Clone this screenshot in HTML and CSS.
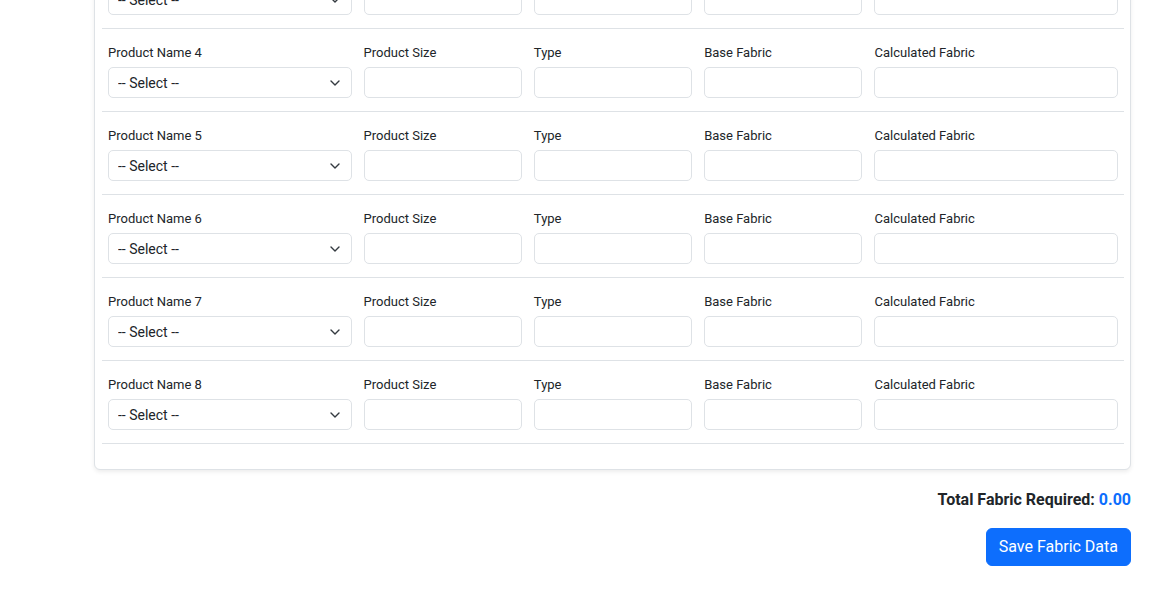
FILE: index.html
```html
<!DOCTYPE html>
<html lang="en">
<head>
<meta charset="utf-8">
<title>Fabric Calculator</title>
<link rel="stylesheet" href="styles.css">
</head>
<body>
<main class="page">
  <section class="card">
    <div class="fabric-row">
      <div class="cell"><label class="field-label">Product Name 1</label><div class="select-wrap"><select class="field select"><option>-- Select --</option></select><svg class="chev" width="10" height="6" viewBox="0 0 10 6"><path d="M1 1 L5 5 L9 1" fill="none" stroke="#343a40" stroke-width="1.4" stroke-linecap="round" stroke-linejoin="round"/></svg></div></div>
      <div class="cell"><label class="field-label">Product Size</label><input class="field" type="text"></div>
      <div class="cell"><label class="field-label">Type</label><input class="field" type="text"></div>
      <div class="cell"><label class="field-label">Base Fabric</label><input class="field" type="text"></div>
      <div class="cell"><label class="field-label">Calculated Fabric</label><input class="field" type="text"></div>
    </div>
    <div class="fabric-row">
      <div class="cell"><label class="field-label">Product Name 2</label><div class="select-wrap"><select class="field select"><option>-- Select --</option></select><svg class="chev" width="10" height="6" viewBox="0 0 10 6"><path d="M1 1 L5 5 L9 1" fill="none" stroke="#343a40" stroke-width="1.4" stroke-linecap="round" stroke-linejoin="round"/></svg></div></div>
      <div class="cell"><label class="field-label">Product Size</label><input class="field" type="text"></div>
      <div class="cell"><label class="field-label">Type</label><input class="field" type="text"></div>
      <div class="cell"><label class="field-label">Base Fabric</label><input class="field" type="text"></div>
      <div class="cell"><label class="field-label">Calculated Fabric</label><input class="field" type="text"></div>
    </div>
    <div class="fabric-row">
      <div class="cell"><label class="field-label">Product Name 3</label><div class="select-wrap"><select class="field select"><option>-- Select --</option></select><svg class="chev" width="10" height="6" viewBox="0 0 10 6"><path d="M1 1 L5 5 L9 1" fill="none" stroke="#343a40" stroke-width="1.4" stroke-linecap="round" stroke-linejoin="round"/></svg></div></div>
      <div class="cell"><label class="field-label">Product Size</label><input class="field" type="text"></div>
      <div class="cell"><label class="field-label">Type</label><input class="field" type="text"></div>
      <div class="cell"><label class="field-label">Base Fabric</label><input class="field" type="text"></div>
      <div class="cell"><label class="field-label">Calculated Fabric</label><input class="field" type="text"></div>
    </div>
    <div class="fabric-row">
      <div class="cell"><label class="field-label">Product Name 4</label><div class="select-wrap"><select class="field select"><option>-- Select --</option></select><svg class="chev" width="10" height="6" viewBox="0 0 10 6"><path d="M1 1 L5 5 L9 1" fill="none" stroke="#343a40" stroke-width="1.4" stroke-linecap="round" stroke-linejoin="round"/></svg></div></div>
      <div class="cell"><label class="field-label">Product Size</label><input class="field" type="text"></div>
      <div class="cell"><label class="field-label">Type</label><input class="field" type="text"></div>
      <div class="cell"><label class="field-label">Base Fabric</label><input class="field" type="text"></div>
      <div class="cell"><label class="field-label">Calculated Fabric</label><input class="field" type="text"></div>
    </div>
    <div class="fabric-row">
      <div class="cell"><label class="field-label">Product Name 5</label><div class="select-wrap"><select class="field select"><option>-- Select --</option></select><svg class="chev" width="10" height="6" viewBox="0 0 10 6"><path d="M1 1 L5 5 L9 1" fill="none" stroke="#343a40" stroke-width="1.4" stroke-linecap="round" stroke-linejoin="round"/></svg></div></div>
      <div class="cell"><label class="field-label">Product Size</label><input class="field" type="text"></div>
      <div class="cell"><label class="field-label">Type</label><input class="field" type="text"></div>
      <div class="cell"><label class="field-label">Base Fabric</label><input class="field" type="text"></div>
      <div class="cell"><label class="field-label">Calculated Fabric</label><input class="field" type="text"></div>
    </div>
    <div class="fabric-row">
      <div class="cell"><label class="field-label">Product Name 6</label><div class="select-wrap"><select class="field select"><option>-- Select --</option></select><svg class="chev" width="10" height="6" viewBox="0 0 10 6"><path d="M1 1 L5 5 L9 1" fill="none" stroke="#343a40" stroke-width="1.4" stroke-linecap="round" stroke-linejoin="round"/></svg></div></div>
      <div class="cell"><label class="field-label">Product Size</label><input class="field" type="text"></div>
      <div class="cell"><label class="field-label">Type</label><input class="field" type="text"></div>
      <div class="cell"><label class="field-label">Base Fabric</label><input class="field" type="text"></div>
      <div class="cell"><label class="field-label">Calculated Fabric</label><input class="field" type="text"></div>
    </div>
    <div class="fabric-row">
      <div class="cell"><label class="field-label">Product Name 7</label><div class="select-wrap"><select class="field select"><option>-- Select --</option></select><svg class="chev" width="10" height="6" viewBox="0 0 10 6"><path d="M1 1 L5 5 L9 1" fill="none" stroke="#343a40" stroke-width="1.4" stroke-linecap="round" stroke-linejoin="round"/></svg></div></div>
      <div class="cell"><label class="field-label">Product Size</label><input class="field" type="text"></div>
      <div class="cell"><label class="field-label">Type</label><input class="field" type="text"></div>
      <div class="cell"><label class="field-label">Base Fabric</label><input class="field" type="text"></div>
      <div class="cell"><label class="field-label">Calculated Fabric</label><input class="field" type="text"></div>
    </div>
    <div class="fabric-row">
      <div class="cell"><label class="field-label">Product Name 8</label><div class="select-wrap"><select class="field select"><option>-- Select --</option></select><svg class="chev" width="10" height="6" viewBox="0 0 10 6"><path d="M1 1 L5 5 L9 1" fill="none" stroke="#343a40" stroke-width="1.4" stroke-linecap="round" stroke-linejoin="round"/></svg></div></div>
      <div class="cell"><label class="field-label">Product Size</label><input class="field" type="text"></div>
      <div class="cell"><label class="field-label">Type</label><input class="field" type="text"></div>
      <div class="cell"><label class="field-label">Base Fabric</label><input class="field" type="text"></div>
      <div class="cell"><label class="field-label">Calculated Fabric</label><input class="field" type="text"></div>
    </div>
  </section>
  <div class="total">Total Fabric Required: <span class="total-value">0.00</span></div>
  <div class="actions"><button class="btn-primary" type="button">Save Fabric Data</button></div>
</main>
</body>
</html>
```

FILE: styles.css
```css
* { box-sizing: border-box; }

html, body {
  margin: 0;
  background: #ffffff;
}

body {
  font-family: Roboto, "Liberation Sans", sans-serif;
  color: #212529;
  overflow: hidden;
}

.page {
  margin: 0 41px 0 94px;
}

.card {
  margin-top: -221px;
  border: 1px solid #dee2e6;
  border-radius: 6px;
  background: #fff;
  padding: 0 6px 25px 7px;
  box-shadow: 0 2px 4px rgba(0, 0, 0, 0.075);
}

.fabric-row {
  display: grid;
  grid-template-columns: 3fr 2fr 2fr 2fr 3fr;
  padding: 13px 0 13px;
  border-bottom: 1px solid #dee2e6;
}

.cell {
  padding: 0 6px;
  min-width: 0;
}

.field-label {
  display: block;
  font-size: 13px;
  line-height: 21px;
  margin-bottom: 4px;
  color: #212529;
}

.field {
  display: block;
  width: 100%;
  height: 31px;
  border: 1px solid #dee2e6;
  border-radius: 5px;
  background: #fff;
  padding: 4px 8px;
  font-family: Roboto, "Liberation Sans", sans-serif;
  font-size: 14px;
  color: #212529;
  outline: none;
}

.select-wrap {
  position: relative;
}

.select {
  appearance: none;
  -webkit-appearance: none;
  padding-left: 9px;
  padding-right: 30px;
}

.chev {
  position: absolute;
  right: 12px;
  top: 13px;
  pointer-events: none;
}

.total {
  margin-top: 18px;
  text-align: right;
  font-size: 16px;
  line-height: 24px;
  font-weight: 700;
  color: #212529;
}

.total-value {
  color: #0d6efd;
}

.actions {
  display: flex;
  justify-content: flex-end;
  margin-top: 16px;
}

.btn-primary {
  background: #0d6efd;
  color: #fff;
  border: 1px solid #0d6efd;
  border-radius: 6px;
  padding: 6px 12px;
  font-family: Roboto, "Liberation Sans", sans-serif;
  font-size: 16px;
  line-height: 24px;
  cursor: pointer;
}
```
